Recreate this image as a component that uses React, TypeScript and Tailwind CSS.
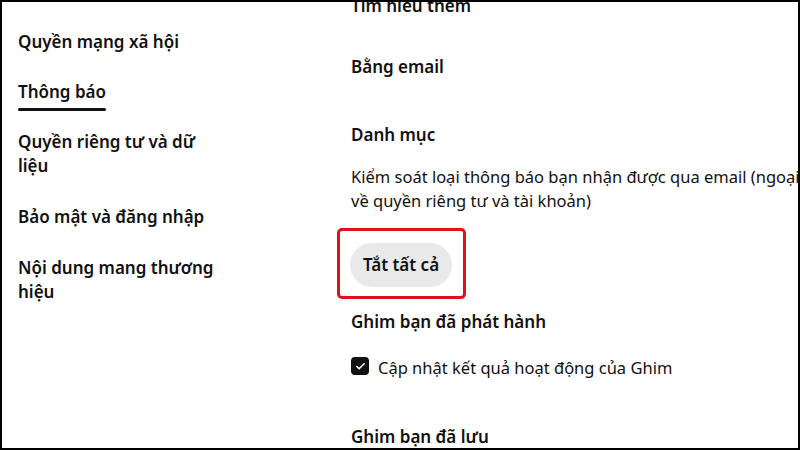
import { Check } from 'lucide-react';

const navItems = [
  { label: ['Quyền mạng xã hội'], top: 'mt-[28px]' },
  { label: ['Thông báo'], top: 'mt-[26px]', active: true },
  { label: ['Quyền riêng tư và dữ', 'liệu'], top: 'mt-[19px]' },
  { label: ['Bảo mật và đăng nhập'], top: 'mt-[27px]' },
  { label: ['Nội dung mang thương', 'hiệu'], top: 'mt-[27px]' },
];

const NavItem = ({ label, top, active }: { label: string[]; top: string; active?: boolean }) => (
  <div className={`${top} flex flex-col items-start`}>
    <span className="text-[17px] font-semibold leading-6 text-[#111]">
      {label.map((line, i) => (
        <span key={i} className="block whitespace-nowrap">
          {line}
        </span>
      ))}
    </span>
    {active && <span className="mt-[4px] h-[3px] w-[88px] rounded-full bg-[#111]"></span>}
  </div>
);

export default function App() {
  return (
    <div
      className="flex h-[450px] w-[800px] overflow-hidden border-2 border-black bg-white text-[#111]"
      style={{ fontFamily: '"Noto Sans", "Open Sans", sans-serif' }}
    >
      <nav className="flex w-[331px] shrink-0 flex-col pl-4">
        {navItems.map((item, i) => (
          <NavItem key={i} {...item} />
        ))}
      </nav>

      <main className="flex min-w-0 flex-1 flex-col overflow-hidden pl-[18px]">
        <h3 className="mt-[-8px] text-[17px] font-semibold leading-6">Tìm hiểu thêm</h3>
        <h3 className="mt-[37px] text-[17px] font-semibold leading-6">Bằng email</h3>
        <h3 className="mt-[44px] text-[17px] font-semibold leading-6">Danh mục</h3>
        <p className="mt-[18px] text-[16.5px] leading-6">
          <span className="block whitespace-nowrap">Kiểm soát loại thông báo bạn nhận được qua email (ngoại trừ thông báo</span>
          <span className="block whitespace-nowrap">về quyền riêng tư và tài khoản)</span>
        </p>

        <div className="ml-[-14px] mt-[15px] w-[129px] rounded-[5px] border-[3px] border-[#e3101b] pb-[9px] pl-[10px] pr-[11px] pt-[12px]">
          <button className="h-[44px] w-[102px] rounded-full bg-[#e9e9e9] text-[17px] font-semibold text-[#111]">
            Tắt tất cả
          </button>
        </div>

        <h3 className="mt-[11px] text-[17px] font-semibold leading-6">Ghim bạn đã phát hành</h3>
        <label className="mt-[20px] flex h-6 items-center gap-[9px]">
          <span className="flex h-[18px] w-[18px] items-center justify-center rounded-[4px] bg-[#111]">
            <Check size={11} strokeWidth={3.5} className="text-white" />
          </span>
          <span className="mt-[3px] text-[16.5px] leading-6">Cập nhật kết quả hoạt động của Ghim</span>
        </label>

        <h3 className="mt-[47px] text-[17px] font-semibold leading-6">Ghim bạn đã lưu</h3>
      </main>
    </div>
  );
}
